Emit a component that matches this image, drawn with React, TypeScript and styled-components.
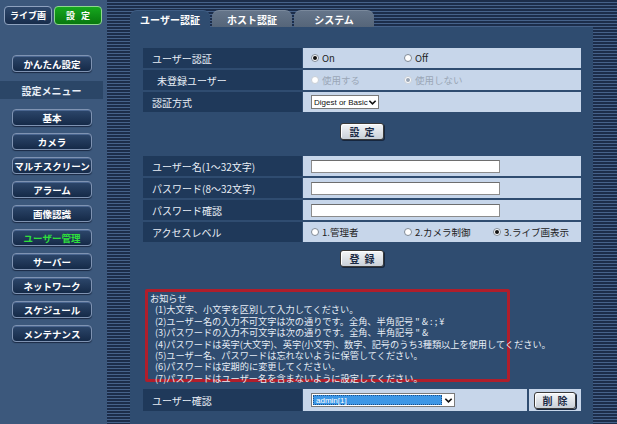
import React from 'react'
import styled, { createGlobalStyle, css } from 'styled-components'

const GlobalStyle = createGlobalStyle`
  html, body {
    margin: 0;
    padding: 0;
  }
  body {
    font-family: "Noto Sans CJK JP", "Liberation Sans", sans-serif;
    background: #3c587c;
  }
`

const stripes = css`
  background: repeating-linear-gradient(to bottom, #1c2d4a 0 2px, #46628a 2px 3px);
`

const Page = styled.div`
  display: flex;
  width: 617px;
  height: 424px;
  overflow: hidden;
`

/* ---------- sidebar ---------- */

const Sidebar = styled.nav`
  width: 107px;
  flex: none;
  background: #3c587c;
  display: flex;
  flex-direction: column;
  padding-top: 6px;
  box-sizing: border-box;
`

const ModeRow = styled.div`
  display: flex;
  gap: 2px;
  padding-left: 4px;
`

const ModeButton = styled.div<{ $active?: boolean }>`
  width: 48px;
  height: 19px;
  box-sizing: border-box;
  border-radius: 4px;
  border: 1px solid ${p => (p.$active ? '#8fd88f' : '#8ea2bf')};
  background: ${p => (p.$active ? 'linear-gradient(#16a81e, #08780e)' : 'linear-gradient(#2e486c, #172c4b)')};
  color: #fff;
  font-weight: bold;
  font-size: 9px;
  letter-spacing: ${p => (p.$active ? '6px' : '0')};
  padding-left: ${p => (p.$active ? '6px' : '0')};
  display: flex;
  align-items: center;
  justify-content: center;
  white-space: nowrap;
`

const MenuButton = styled.div<{ $active?: boolean; $top?: number }>`
  width: 80px;
  height: 17px;
  margin: ${p => p.$top ?? 7}px 0 0 12px;
  box-sizing: border-box;
  border-radius: 4px;
  border: 1px solid #7f93b2;
  box-shadow: inset 0 1px 0 #4a6690, 0 1px 1px #1a2a44;
  background: linear-gradient(#2d476b, #152a48);
  color: ${p => (p.$active ? '#2ee03c' : '#ffffff')};
  font-weight: bold;
  font-size: 9.5px;
  display: flex;
  align-items: center;
  justify-content: center;
  white-space: nowrap;
`

const MenuLabel = styled.div`
  width: 103px;
  height: 18px;
  margin-top: 9px;
  margin-bottom: 3px;
  background: #2b4667;
  color: #e8eef6;
  font-weight: bold;
  font-size: 10px;
  display: flex;
  align-items: center;
  justify-content: center;
`

/* ---------- main area ---------- */

const Main = styled.div`
  flex: 1;
  min-width: 0;
  ${stripes};
  padding: 10px 24px 0 23px;
  display: flex;
  flex-direction: column;
`

const Tabs = styled.div`
  display: flex;
  gap: 2px;
  height: 17px;
`

const Tab = styled.div<{ $active?: boolean }>`
  width: 80px;
  box-sizing: border-box;
  border-radius: 7px 7px 0 0;
  background: ${p => (p.$active ? '#2f4c70' : 'linear-gradient(#65758a, #556579)')};
  border-top: 1px solid ${p => (p.$active ? '#3f5d84' : '#7a899c')};
  color: #fff;
  font-weight: bold;
  font-size: 10px;
  display: flex;
  align-items: center;
  justify-content: center;
`

const Panel = styled.div`
  flex: 1;
  min-width: 0;
  background: #2f4c70;
  padding: 21px 12px 0 13px;
  display: flex;
  flex-direction: column;
`

const Table = styled.div<{ $top?: number }>`
  display: grid;
  grid-template-columns: 159px minmax(0, 1fr);
  row-gap: 2px;
  column-gap: 1px;
  margin-top: ${p => p.$top ?? 0}px;
`

const Label = styled.div<{ $indent?: boolean; $tall?: boolean }>`
  height: ${p => (p.$tall ? 22 : 20)}px;
  background: #1f395a;
  color: #e8eef6;
  font-size: 10px;
  display: flex;
  align-items: center;
  padding-left: ${p => (p.$indent ? 14 : 9)}px;
  white-space: nowrap;
`

const Value = styled.div<{ $split?: boolean }>`
  height: ${p => (p.$split ? 22 : 20)}px;
  background: #c7d6ea;
  color: #222;
  font-size: 9.5px;
  display: flex;
  align-items: center;
  padding-left: 8px;
  white-space: nowrap;
  ${p =>
    p.$split &&
    css`
      padding-left: 0;
      gap: 2px;
      background: #2f4c70;
    `}
`

const Cell = styled.div<{ $grow?: boolean }>`
  height: 100%;
  background: #c7d6ea;
  display: flex;
  align-items: center;
  ${p => (p.$grow ? 'flex: 1; padding-left: 8px;' : 'width: 52px; justify-content: center;')}
`

const Option = styled.label<{ $muted?: boolean; $w?: number }>`
  width: ${p => p.$w ?? 93}px;
  flex: none;
  display: flex;
  align-items: center;
  gap: 3px;
  color: ${p => (p.$muted ? '#9aa6b6' : '#222')};
`

const RadioDot = styled.span<{ $checked?: boolean; $muted?: boolean }>`
  width: 8px;
  height: 8px;
  border-radius: 50%;
  box-sizing: border-box;
  border: 1px solid ${p => (p.$muted ? '#c8ced6' : '#808a96')};
  background: #fff;
  display: inline-flex;
  align-items: center;
  justify-content: center;
  &::after {
    content: '';
    width: 4px;
    height: 4px;
    border-radius: 50%;
    background: ${p => (p.$checked ? (p.$muted ? '#9aa6b6' : '#111') : 'transparent')};
  }
`

const SelectBox = styled.div<{ $w: number; $picked?: boolean }>`
  width: ${p => p.$w}px;
  height: 14px;
  box-sizing: border-box;
  border: 1px solid #7a7a7a;
  background: #fff;
  display: flex;
  align-items: stretch;
  font-family: "Liberation Sans", Arial, sans-serif;
  font-size: 8px;
  color: #111;
  white-space: nowrap;
  overflow: hidden;
  span {
    flex: 1;
    min-width: 0;
    display: flex;
    align-items: center;
    padding-left: 2px;
    ${p =>
      p.$picked &&
      css`
        background: #3d97e6;
        color: #fff;
        margin: 1px;
        border: 1px dotted #1b4f8a;
      `}
  }
  svg {
    width: 11px;
    flex: none;
    align-self: center;
  }
`

const TextInput = styled.div`
  width: 189px;
  height: 13px;
  box-sizing: border-box;
  background: #fff;
  border: 1px solid #8c8c8c;
  border-top-color: #6e6e6e;
`

const ButtonRow = styled.div<{ $top: number; $bottom: number }>`
  display: flex;
  justify-content: center;
  margin: ${p => p.$top}px 0 ${p => p.$bottom}px;
`

const PushButton = styled.div<{ $w?: number }>`
  width: ${p => p.$w ?? 44}px;
  height: 17px;
  box-sizing: border-box;
  border-radius: 3px;
  border: 1px solid #3a3a3a;
  box-shadow: inset 1px 1px 0 #fff, 1px 1px 0 #16263e;
  background: linear-gradient(#f4f6f8, #c9d0d8);
  color: #1b2a44;
  font-weight: bold;
  font-size: 10px;
  letter-spacing: 5px;
  padding-left: 5px;
  display: flex;
  align-items: center;
  justify-content: center;
`

const Notice = styled.div`
  width: 365px;
  height: 93px;
  box-sizing: border-box;
  border: 3px solid #b01e2b;
  border-radius: 2px;
  margin-left: 2px;
  padding: 1px 0 0 2px;
  color: #e6ecf5;
  font-size: 9.2px;
  line-height: 11.4px;
  white-space: nowrap;
`

const NoticeLine = styled.div`
  padding-left: 5px;
`

const Chevron = () => (
  <svg viewBox="0 0 12 10" height="9">
    <path d="M2.5 3 L6 6.5 L9.5 3" fill="none" stroke="#111" strokeWidth="1.8" />
  </svg>
)

const menu = ['基本', 'カメラ', 'マルチスクリーン', 'アラーム', '画像認識', 'ユーザー管理', 'サーバー', 'ネットワーク', 'スケジュール', 'メンテナンス']

const notices = [
  '(1)大文字、小文字を区別して入力してください。',
  '(2)ユーザー名の入力不可文字は次の通りです。全角、半角記号 " & : ; ¥',
  '(3)パスワードの入力不可文字は次の通りです。全角、半角記号 " &',
  '(4)パスワードは英字(大文字)、英字(小文字)、数字、記号のうち3種類以上を使用してください。',
  '(5)ユーザー名、パスワードは忘れないように保管してください。',
  '(6)パスワードは定期的に変更してください。',
  '(7)パスワードはユーザー名を含まないように設定してください。',
]

const App: React.FC = () => {
  return (
    <>
      <GlobalStyle />
      <Page>
        <Sidebar>
          <ModeRow>
            <ModeButton>ライブ画</ModeButton>
            <ModeButton $active>設定</ModeButton>
          </ModeRow>
          <MenuButton $top={30}>かんたん設定</MenuButton>
          <MenuLabel>設定メニュー</MenuLabel>
          {menu.map(m => (
            <MenuButton key={m} $active={m === 'ユーザー管理'}>
              {m}
            </MenuButton>
          ))}
        </Sidebar>

        <Main>
          <Tabs>
            <Tab $active>ユーザー認証</Tab>
            <Tab>ホスト認証</Tab>
            <Tab>システム</Tab>
          </Tabs>
          <Panel>
            <Table>
              <Label>ユーザー認証</Label>
              <Value>
                <Option>
                  <RadioDot $checked />
                  On
                </Option>
                <Option>
                  <RadioDot />
                  Off
                </Option>
              </Value>
              <Label $indent>未登録ユーザー</Label>
              <Value>
                <Option $muted>
                  <RadioDot $muted />
                  使用する
                </Option>
                <Option $muted>
                  <RadioDot $muted $checked />
                  使用しない
                </Option>
              </Value>
              <Label>認証方式</Label>
              <Value>
                <SelectBox $w={68}>
                  <span>Digest or Basic</span>
                  <Chevron />
                </SelectBox>
              </Value>
            </Table>

            <ButtonRow $top={11} $bottom={16}>
              <PushButton>設定</PushButton>
            </ButtonRow>

            <Table>
              <Label>ユーザー名(1〜32文字)</Label>
              <Value>
                <TextInput />
              </Value>
              <Label>パスワード(8〜32文字)</Label>
              <Value>
                <TextInput />
              </Value>
              <Label>パスワード確認</Label>
              <Value>
                <TextInput />
              </Value>
              <Label>アクセスレベル</Label>
              <Value>
                <Option>
                  <RadioDot />
                  1.管理者
                </Option>
                <Option $w={89}>
                  <RadioDot />
                  2.カメラ制御
                </Option>
                <Option $w={80}>
                  <RadioDot $checked />
                  3.ライブ画表示
                </Option>
              </Value>
            </Table>

            <ButtonRow $top={8} $bottom={22}>
              <PushButton>登録</PushButton>
            </ButtonRow>

            <Notice>
              <div>お知らせ</div>
              {notices.map(n => (
                <NoticeLine key={n}>{n}</NoticeLine>
              ))}
            </Notice>

            <Table $top={7}>
              <Label $tall>ユーザー確認</Label>
              <Value $split>
                <Cell $grow>
                  <SelectBox $w={144} $picked>
                    <span>admin[1]</span>
                    <Chevron />
                  </SelectBox>
                </Cell>
                <Cell>
                  <PushButton $w={42}>削除</PushButton>
                </Cell>
              </Value>
            </Table>
          </Panel>
        </Main>
      </Page>
    </>
  )
}

export default App
